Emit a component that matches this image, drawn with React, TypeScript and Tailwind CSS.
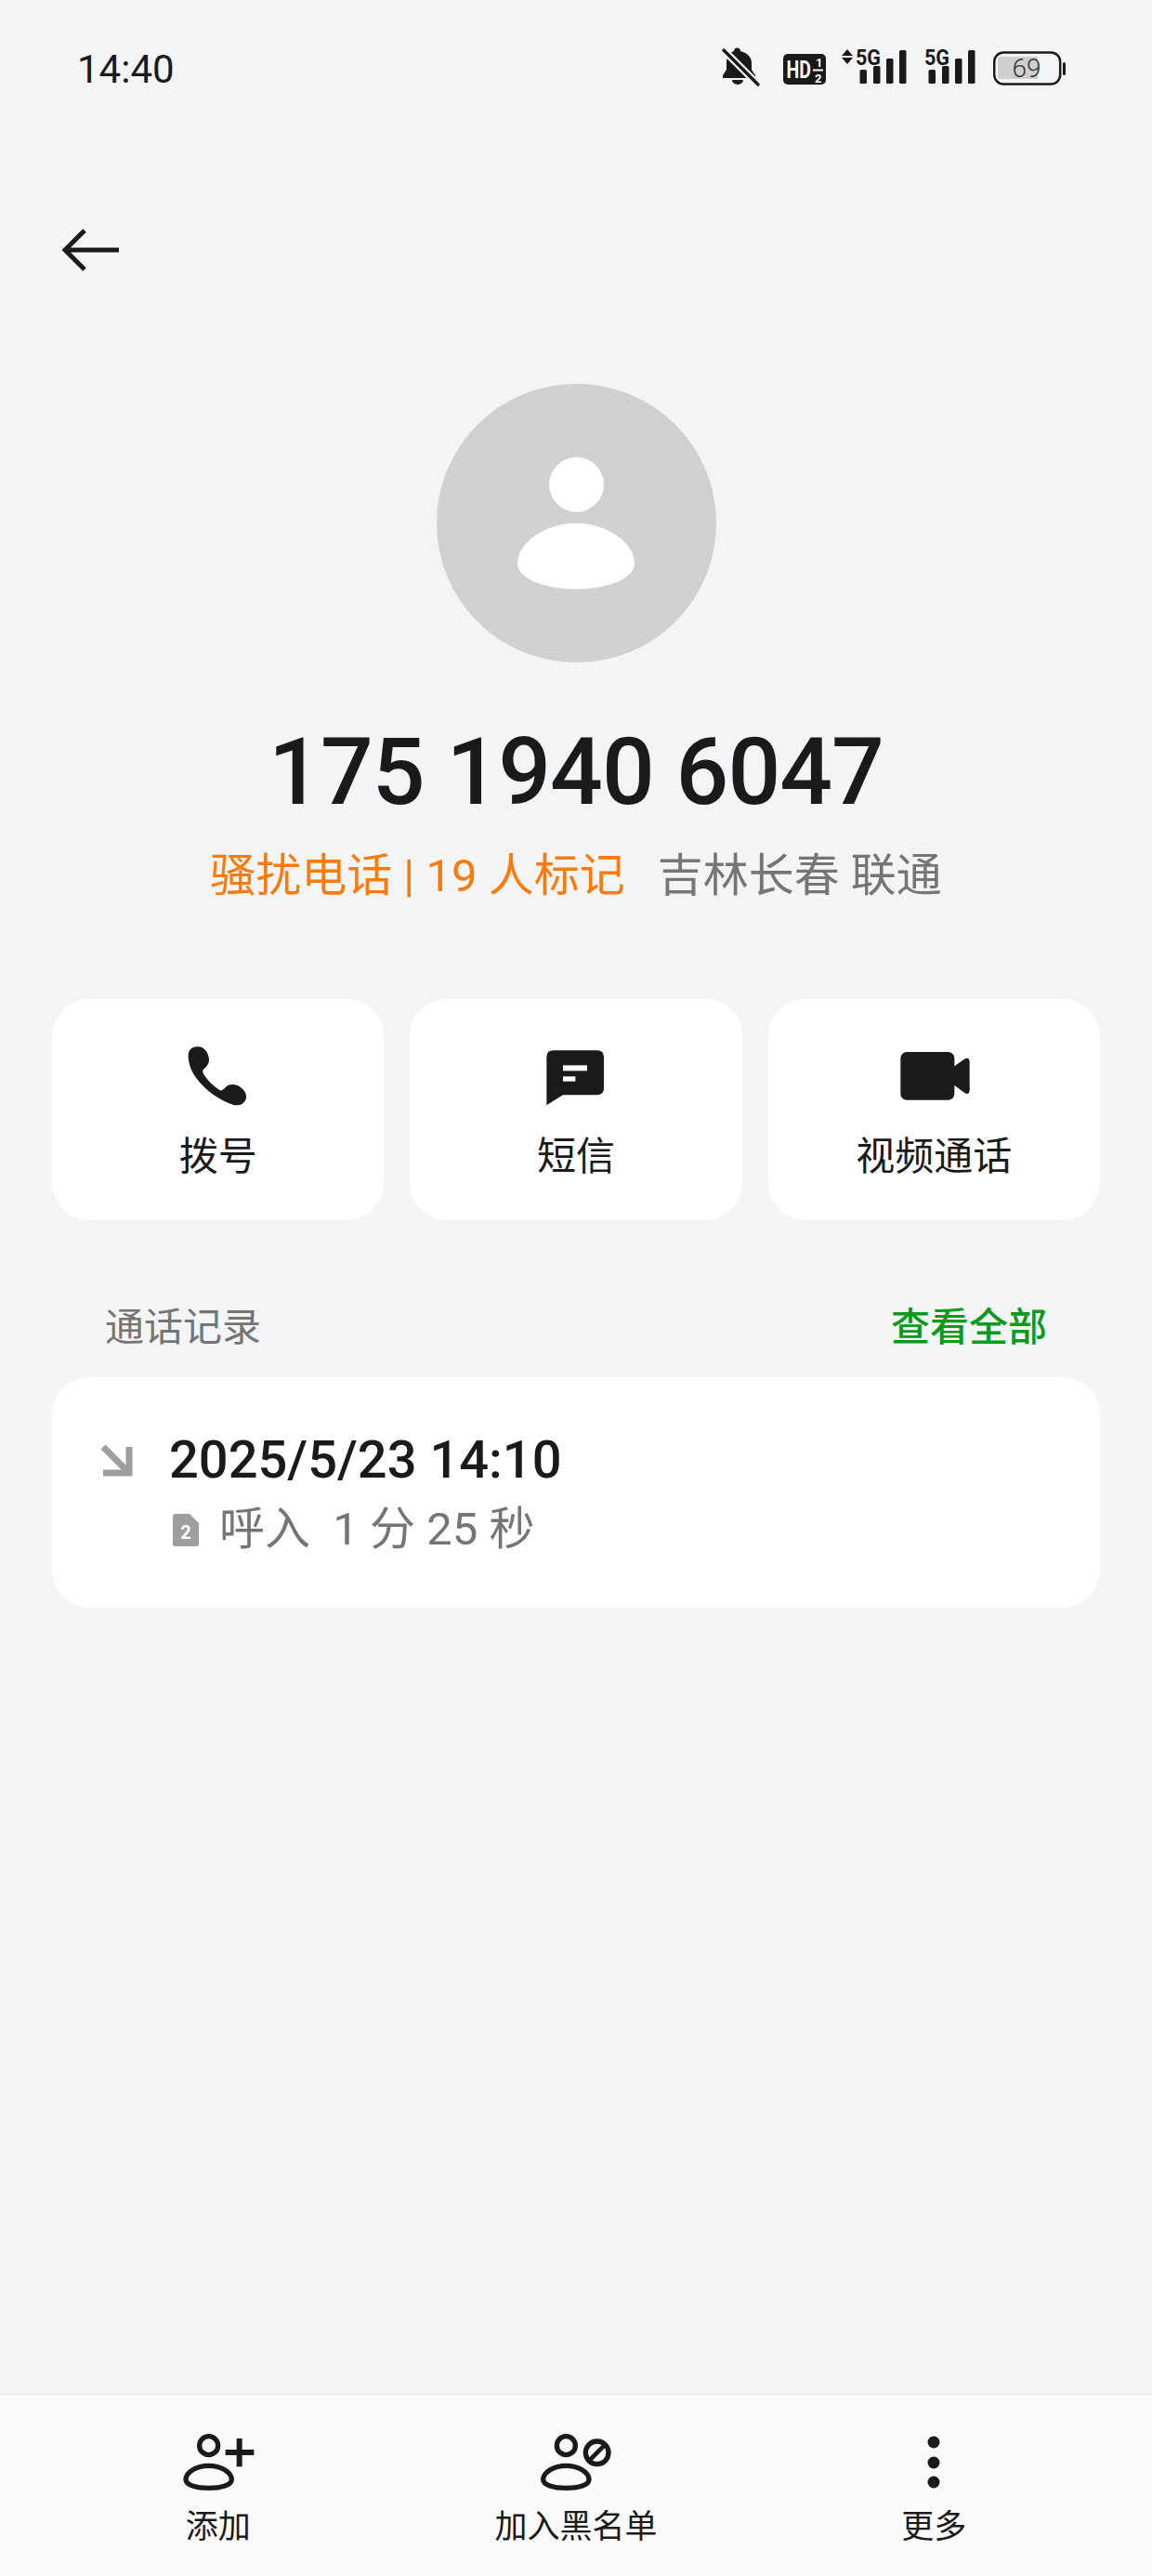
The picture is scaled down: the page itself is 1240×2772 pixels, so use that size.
import React from "react";

const INK = "#1a1a1a";

function Bars({ x }: { x: number[] }) {
  const tops = [76, 72, 64, 55];
  return (
    <>
      {x.map((v, i) => (
        <rect key={i} x={v} y={tops[i]} width={7.5} height={91 - tops[i]} rx={1.5} fill={INK} />
      ))}
    </>
  );
}

function StatusIcons() {
  return (
    <div className="flex items-center">
      <svg width="54" height="60" viewBox="772 44 54 60">
        <path d="M797 56c0-2-1.500-3.500-3.500-3.500S790 54 790 56c-6 2-8 7-8 13v7l-4 6v3h35v-3l-4-6v-7c0-6-4-11-12-13z" fill={INK} />
        <path d="M788 87a6 5 0 0 0 12 0z" fill={INK} />
        <path d="M779 55l37 37" stroke="#f3f4f6" strokeWidth="8" />
        <path d="M779 55l37 37" stroke={INK} strokeWidth="3.500" strokeLinecap="round" />
      </svg>
      <svg className="ml-[17px]" width="46" height="60" viewBox="843 44 46 60">
        <rect x="843" y="59" width="46" height="33" rx="5" fill={INK} />
        <text transform="translate(846.500 85) scale(0.75 1)" fontFamily="Roboto" fontWeight="700" fontSize="26" fill="#fff">HD</text>
        <text x="878" y="73" fontFamily="Roboto" fontWeight="700" fontSize="13" fill="#fff">1</text>
        <text x="877" y="90" fontFamily="Roboto" fontWeight="700" fontSize="13" fill="#fff">2</text>
        <rect x="875" y="75.500" width="11" height="2" fill="#fff" />
      </svg>
      <svg className="ml-[16px]" width="73" height="60" viewBox="905 44 73 60">
        <path d="M912 54l6 7h-12zM912 70l6-7h-12z" fill={INK} />
        <text x="921" y="71" fontFamily="Roboto" fontWeight="700" fontSize="24" fill={INK} textLength="27" lengthAdjust="spacingAndGlyphs">5G</text>
        <Bars x={[925.500, 940, 954, 968]} />
      </svg>
      <svg className="ml-[17px]" width="57" height="60" viewBox="995 44 57 60">
        <text x="995" y="71" fontFamily="Roboto" fontWeight="700" fontSize="24" fill={INK} textLength="27" lengthAdjust="spacingAndGlyphs">5G</text>
        <Bars x={[999.500, 1014, 1028, 1042]} />
      </svg>
      <svg className="ml-[17px]" width="79" height="60" viewBox="1069 44 79 60">
        <rect x="1070.200" y="57.500" width="71" height="34" rx="10" fill="none" stroke={INK} strokeWidth="2.500" />
        <path d="M1077 62h40v24h-40a3 3 0 0 1-3-3v-18a3 3 0 0 1 3-3z" fill="#cfcfcf" />
        <text x="1105" y="84" textAnchor="middle" fontFamily="Roboto" fontWeight="300" fontSize="28" fill="#333">69</text>
        <rect x="1144" y="68" width="3" height="14" rx="1.500" fill={INK} />
      </svg>
    </div>
  );
}

function PhoneIcon() {
  return (
    <svg width="110" height="90" viewBox="0 0 330 270">
      <path d="M68 75C68 55 82 45 100 46C118 47 132 62 135 85C136 100 128 110 118 118C113 123 114 130 119 137C133 158 150 173 170 187C178 190 186 178 196 171C208 165 222 167 238 178C252 188 258 203 254 215C248 232 230 238 212 233C170 220 125 190 92 145C78 125 68 100 68 75Z" fill={INK} />
    </svg>
  );
}

function MessageIcon() {
  return (
    <svg width="110" height="90" viewBox="-15 0 330 270">
      <path d="M55 80Q55 58 77 58H218Q240 58 240 80V180Q240 202 218 202H108L55 235Z" fill={INK} />
      <rect x="108" y="106" width="78" height="18" fill="#fff" />
      <rect x="108" y="142" width="40" height="16" fill="#fff" />
    </svg>
  );
}

function VideoIcon() {
  return (
    <svg width="110" height="90" viewBox="0 0 330 270">
      <rect x="58" y="63" width="174" height="155" rx="20" fill={INK} />
      <path d="M228 112L266 85Q280 78 281 95V186Q280 203 266 196L228 168Z" fill={INK} />
    </svg>
  );
}

function Person({ cx }: { cx: number }) {
  return (
    <>
      <circle cx={cx} cy="95" r="30" fill="none" stroke={INK} strokeWidth="16" />
      <path
        d={`M${cx - 74} 205C${cx - 74} 180 ${cx - 39} 160 ${cx} 160C${cx + 39} 160 ${cx + 74} 180 ${cx + 74} 205C${cx + 74} 222 ${cx + 41} 232 ${cx} 232C${cx - 41} 232 ${cx - 74} 222 ${cx - 74} 205Z`}
        fill="none"
        stroke={INK}
        strokeWidth="16"
      />
    </>
  );
}

function AddIcon() {
  return (
    <svg width="110" height="90" viewBox="0 0 330 270">
      <Person cx={134} />
      <rect x="188" y="108" width="92" height="18" fill={INK} />
      <rect x="224" y="72" width="18" height="91" fill={INK} />
    </svg>
  );
}

function BlockIcon() {
  return (
    <svg width="110" height="90" viewBox="-15 0 330 270">
      <Person cx={118} />
      <circle cx="218" cy="118" r="37" fill="none" stroke={INK} strokeWidth="16" />
      <path d="M192 144L244 92" stroke={INK} strokeWidth="14" />
    </svg>
  );
}

function MoreIcon() {
  return (
    <svg width="110" height="90" viewBox="0 0 110 90">
      <circle cx="55" cy="28" r="6.500" fill={INK} />
      <circle cx="55" cy="50" r="6.500" fill={INK} />
      <circle cx="55" cy="71" r="6.500" fill={INK} />
    </svg>
  );
}

function ActionCard({ icon, label }: { icon: React.ReactNode; label: string }) {
  return (
    <div className="h-[238px] rounded-[40px] bg-white flex flex-col items-center pt-[36px]">
      {icon}
      <div className="mt-[16px] text-[42px] leading-[56px] text-[#1a1a1a]">{label}</div>
    </div>
  );
}

function BottomItem({ icon, label }: { icon: React.ReactNode; label: string }) {
  return (
    <div className="flex flex-col items-center">
      {icon}
      <div className="mt-[10px] text-[35px] leading-[40px] text-[#1a1a1a]">{label}</div>
    </div>
  );
}

export default function App() {
  return (
    <div className="w-[1240px] h-[2772px] bg-[#f3f4f6] flex flex-col font-['Roboto','Noto_Sans_CJK_SC',sans-serif] overflow-hidden">
      <div className="h-[146px] flex items-center justify-between pl-[83px] pr-[92px]">
        <span className="pt-[3px] text-[42px] text-[#1a1a1a]">14:40</span>
        <StatusIcons />
      </div>

      <div className="mt-[100px] pl-[67px]">
        <svg className="block" width="62" height="46" viewBox="0 0 62 46">
          <path d="M61 23H3M24 2L3 23L24 44" fill="none" stroke={INK} strokeWidth="5" />
        </svg>
      </div>

      <div className="mt-[121px] flex flex-col items-center">
        <div className="w-[301px] h-[300px] rounded-full bg-[#cfd0d2] flex flex-col items-center pt-[79px]">
          <div className="w-[59px] h-[59px] rounded-full bg-white" />
          <svg className="mt-[12px]" width="126" height="71" viewBox="0 0 126 71">
            <path d="M0 43C0 21 30 0 63 0C96 0 126 21 126 43C126 60 96 71 63 71C30 71 0 60 0 43Z" fill="#fff" />
          </svg>
        </div>
        <div className="mt-[58px] text-[100px] leading-[120px] font-medium tracking-[-1px] text-[#1a1a1a]">
          175 1940 6047
        </div>
        <div className="mt-[22px] flex gap-[35px] text-[49px] leading-[60px]">
          <span className="text-[#f97c0a]">骚扰电话 | 19 人标记</span>
          <span className="text-[#757575]">吉林长春 联通</span>
        </div>
      </div>

      <div className="mt-[102px] mx-[56px] grid grid-cols-3 gap-[28px]">
        <ActionCard icon={<PhoneIcon />} label="拨号" />
        <ActionCard icon={<MessageIcon />} label="短信" />
        <ActionCard icon={<VideoIcon />} label="视频通话" />
      </div>

      <div className="mt-[85px] h-[60px] flex items-center justify-between pl-[113px] pr-[113px] text-[42px]">
        <span className="text-[#757575]">通话记录</span>
        <span className="text-[#0a9a1c] font-medium">查看全部</span>
      </div>

      <div className="mt-[24px] mx-[56px] h-[248px] rounded-[40px] bg-white flex pl-[52px] pt-[54px]">
        <svg className="mt-[18px] shrink-0" width="36" height="36" viewBox="0 0 36 36">
          <path d="M3 3L29 29" stroke="#9e9e9e" strokeWidth="7" />
          <path d="M3 31H31V3" fill="none" stroke="#9e9e9e" strokeWidth="7" />
        </svg>
        <div className="ml-[38px]">
          <div className="text-[56px] leading-[70px] font-medium text-[#1a1a1a]">2025/5/23 14:10</div>
          <div className="mt-[10px] flex items-center">
            <div className="relative w-[28px] h-[35px] ml-[4px]">
              <svg width="28" height="35" viewBox="0 0 28 35">
                <path d="M3 0H18L28 10V32a3 3 0 0 1-3 3H3a3 3 0 0 1-3-3V3a3 3 0 0 1 3-3Z" fill="#9e9e9e" />
                <text x="14" y="27" textAnchor="middle" fontFamily="Roboto" fontWeight="700" fontSize="20" fill="#fff">2</text>
              </svg>
            </div>
            <span className="ml-[22px] text-[49px] leading-[60px] text-[#757575] whitespace-pre">呼入  1 分 25 秒</span>
          </div>
        </div>
      </div>

      <div className="mt-auto h-[196px] border-t border-[#e3e3e3] bg-[#fafafa] px-[56px] pt-[23px] grid grid-cols-3 gap-[28px] content-start">
        <BottomItem icon={<AddIcon />} label="添加" />
        <BottomItem icon={<BlockIcon />} label="加入黑名单" />
        <BottomItem icon={<MoreIcon />} label="更多" />
      </div>
    </div>
  );
}
